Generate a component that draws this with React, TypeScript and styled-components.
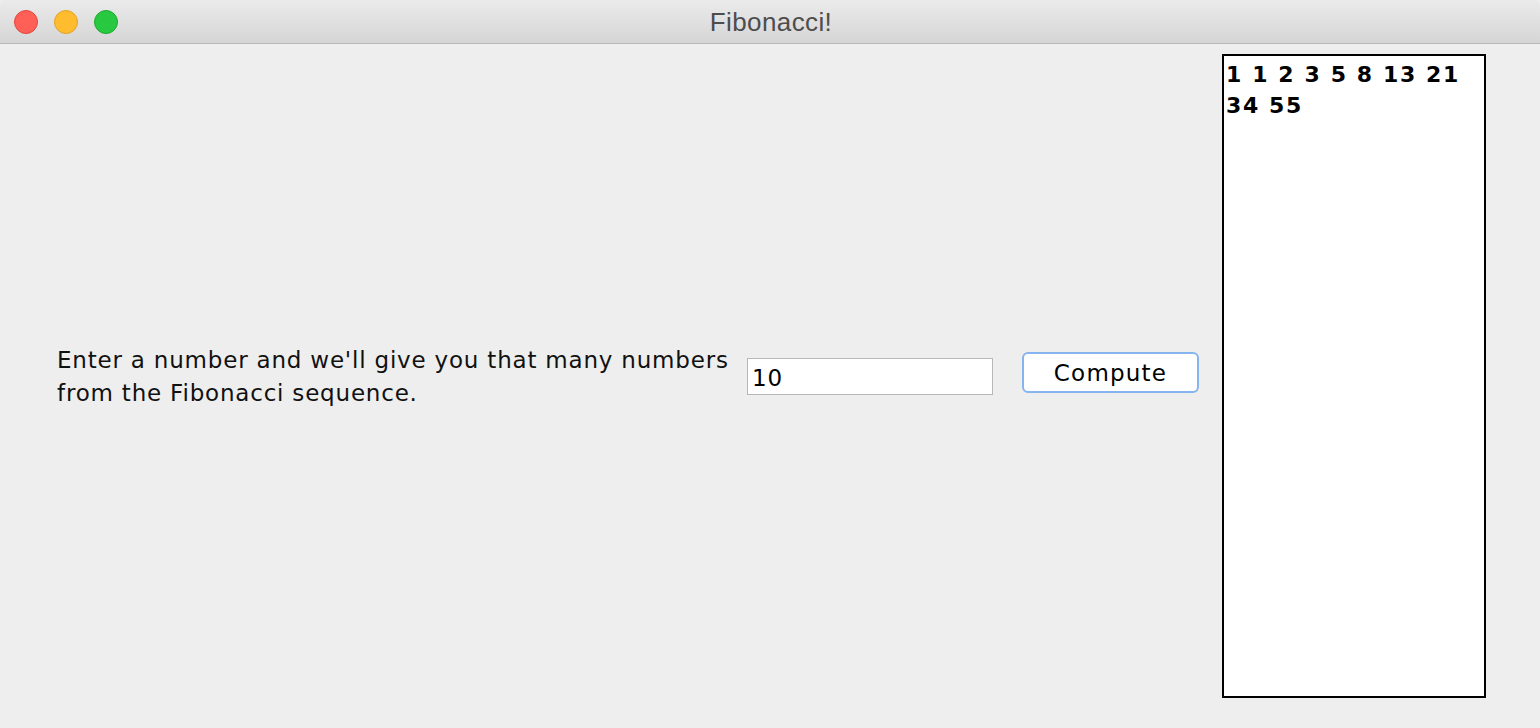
import React from "react";
import styled, { createGlobalStyle } from "styled-components";

const Global = createGlobalStyle`
  html, body { margin: 0; padding: 0; background: #eeeeee; }
  body { width: 1540px; height: 728px; overflow: hidden; }
`;

const Window = styled.div`
  width: 1540px;
  height: 728px;
  display: flex;
  flex-direction: column;
  background: #eeeeee;
  font-family: "DejaVu Sans", sans-serif;
`;

const TitleBar = styled.div`
  height: 43px;
  border-bottom: 1px solid #b9b9b9;
  background: linear-gradient(#ebebeb, #d5d5d5);
  display: flex;
  align-items: center;
  position: relative;
  border-radius: 6px 6px 0 0;
`;

const Lights = styled.div`
  display: flex;
  gap: 16px;
  padding-left: 14px;
`;

const Light = styled.span<{ $fill: string; $edge: string }>`
  width: 24px;
  height: 24px;
  box-sizing: border-box;
  border-radius: 50%;
  background: ${(p) => p.$fill};
  border: 1px solid ${(p) => p.$edge};
`;

const Title = styled.div`
  position: absolute;
  left: 0;
  right: 0;
  top: 0;
  bottom: 0;
  display: flex;
  align-items: center;
  justify-content: center;
  font-family: "Liberation Sans", Arial, sans-serif;
  font-size: 26px;
  letter-spacing: 0.4px;
  color: #4d4d4d;
  padding-left: 2px;
  padding-top: 1px;
  pointer-events: none;
`;

const Content = styled.div`
  flex: 1;
  display: flex;
  align-items: center;
  padding: 10px 0 30px 57px;
`;

const Label = styled.div`
  width: 690px;
  font-size: 23px;
  letter-spacing: 0.8px;
  line-height: 33px;
  color: #111;
  margin-top: 2px;
`;

const Field = styled.input`
  width: 246px;
  height: 37px;
  box-sizing: border-box;
  border: 1px solid #b8b8b8;
  background: #fff;
  font-family: "DejaVu Sans", sans-serif;
  font-size: 23px;
  letter-spacing: 0.8px;
  padding: 3px 4px 0;
  color: #000;
  outline: none;
  margin-top: 0;
`;

const Button = styled.button`
  width: 177px;
  height: 41px;
  margin-left: 29px;
  box-sizing: border-box;
  border: 2px solid #86b4ee;
  border-radius: 6px;
  background: #fff;
  font-family: "DejaVu Sans", sans-serif;
  font-size: 23px;
  letter-spacing: 1.2px;
  color: #000;
  padding: 0;
  margin-top: -7px;
`;

const Output = styled.div`
  width: 264px;
  height: 644px;
  margin-left: 23px;
  align-self: stretch;
  box-sizing: border-box;
  border: 2px solid #000;
  background: #fff;
  padding: 3px 2px;
  font-family: "DejaVu Sans", sans-serif;
  font-weight: bold;
  font-size: 22px;
  line-height: 31px;
  letter-spacing: 1.6px;
  color: #000;
  white-space: pre-wrap;
`;

export default function App() {
  return (
    <>
      <Global />
      <Window>
        <TitleBar>
          <Lights>
            <Light $fill="#fe5f57" $edge="#e2463f" />
            <Light $fill="#febc2e" $edge="#e1a325" />
            <Light $fill="#28c840" $edge="#1eaa2f" />
          </Lights>
          <Title>Fibonacci!</Title>
        </TitleBar>
        <Content>
          <Label>
            Enter a number and we'll give you that many numbers
            <br />
            from the Fibonacci sequence.
          </Label>
          <Field defaultValue="10" />
          <Button>Compute</Button>
          <Output>{"1 1 2 3 5 8 13 21\n34 55"}</Output>
        </Content>
      </Window>
    </>
  );
}
